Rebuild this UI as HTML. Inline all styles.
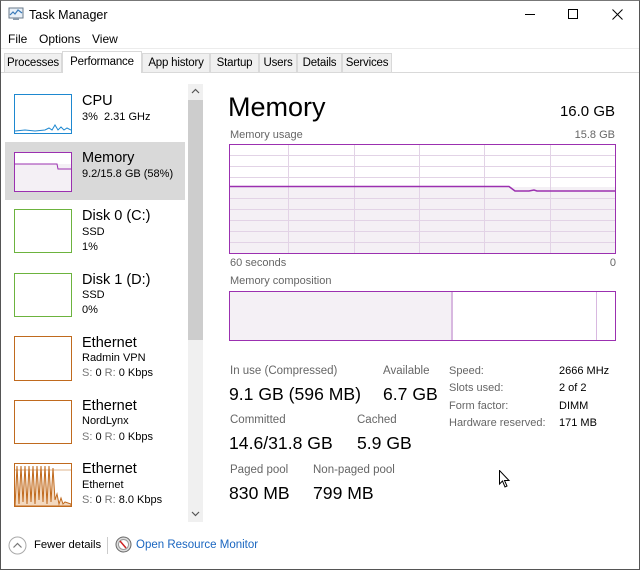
<!DOCTYPE html>
<html><head><meta charset="utf-8"><style>
*{margin:0;padding:0;box-sizing:border-box}
body{width:640px;height:570px;overflow:hidden;background:#fff;font-family:"Liberation Sans",sans-serif;color:#000;position:relative}
.a{position:absolute;white-space:nowrap}
.frame{position:absolute;left:0;top:0;width:640px;height:570px;border:1px solid #555;border-top-color:#777;pointer-events:none}
.tab{position:absolute;top:53px;height:19px;border:1px solid #d9d9d9;border-bottom:none;background:#f0f0f0;font-size:11.5px;line-height:18px;text-align:center;white-space:nowrap;overflow:hidden;color:#000;letter-spacing:-0.2px}
.th{position:absolute;left:14px;width:58px;height:40px;background:#fff}
.t1{font-size:14.5px;left:82px}
.t2{font-size:11px;left:82px}
.g{color:#777}
.lbl{font-size:11.5px;color:#666}
.big{font-size:17.6px}
.sl{font-size:11px;color:#666}
.sv{font-size:11px;color:#000}
</style></head><body>
<svg class="a" style="left:8px;top:7px" width="16" height="14" viewBox="0 0 16 14"><rect x="1" y="1" width="14" height="10" fill="#e8f0f8" stroke="#6a7a8a"/><polyline points="2,8 5,5 7,7 10,3 14,6" fill="none" stroke="#3a7ab8" stroke-width="1.2"/><rect x="5" y="11" width="6" height="2" fill="#8a9aaa"/></svg>
<div class="a" style="left:29px;top:8px;font-size:12.5px">Task Manager</div>
<div class="a" style="left:525px;top:14px;width:10px;height:1px;background:#000"></div>
<div class="a" style="left:568px;top:9px;width:10px;height:10px;border:1px solid #000"></div>
<svg class="a" style="left:612px;top:9px" width="11" height="11"><path d="M0.5 0.5L10.5 10.5M10.5 0.5L0.5 10.5" stroke="#000" stroke-width="1"/></svg>
<div class="a" style="left:8px;top:32px;font-size:12px">File</div>
<div class="a" style="left:39px;top:32px;font-size:12px">Options</div>
<div class="a" style="left:92px;top:32px;font-size:12px">View</div>
<div class="a" style="left:1px;top:48px;width:638px;height:1px;background:#ececec"></div>
<div class="a" style="left:1px;top:72px;width:638px;height:1px;background:#d9d9d9"></div>
<div class="tab" style="left:4px;width:58px">Processes</div>
<div class="tab" style="left:62px;top:51px;height:22px;width:80px;background:#fff;line-height:20px">Performance</div>
<div class="tab" style="left:142px;width:68px">App history</div>
<div class="tab" style="left:210px;width:49px">Startup</div>
<div class="tab" style="left:259px;width:38px">Users</div>
<div class="tab" style="left:297px;width:45px">Details</div>
<div class="tab" style="left:342px;width:50px">Services</div>
<div class="a" style="left:5px;top:142px;width:180px;height:58px;background:#d9d9d9"></div>
<div class="th" style="top:94px;border:1px solid #1e88d0"><svg width="56" height="38" style="position:absolute;left:0;top:0"><polyline points="0,36 10,35 20,36 30,35 34,33 37,35 40,30 43,35 46,32 49,35 52,33 56,35" fill="none" stroke="#1e88d0" stroke-width="1"/></svg></div>
<div class="a t1" style="top:93px">CPU</div><div class="a t2" style="top:111px">3%&nbsp; 2.31 GHz</div>
<div class="th" style="top:152px;border:1px solid #9b30b0;background:linear-gradient(#fff 0 11px,#f4f0f5 11px)"><svg width="56" height="38" style="position:absolute;left:0;top:0"><polyline points="0,11 42,11 43,16 56,16" fill="none" stroke="#9b30b0" stroke-width="1"/></svg></div>
<div class="a t1" style="top:150px">Memory</div><div class="a t2" style="top:168px">9.2/15.8 GB (58%)</div>
<div class="th" style="top:209px;height:44px;border:1px solid #6cb33e"></div>
<div class="a t1" style="top:208px">Disk 0 (C:)</div><div class="a t2" style="top:226px">SSD</div><div class="a t2" style="top:241px">1%</div>
<div class="th" style="top:273px;height:44px;border:1px solid #6cb33e"></div>
<div class="a t1" style="top:272px">Disk 1 (D:)</div><div class="a t2" style="top:289px">SSD</div><div class="a t2" style="top:304px">0%</div>
<div class="th" style="top:336px;height:45px;border:1px solid #c06a1e"></div>
<div class="a t1" style="top:335px">Ethernet</div><div class="a t2" style="top:352px">Radmin VPN</div><div class="a t2" style="top:367px"><span class="g">S:</span> 0 <span class="g">R:</span> 0 Kbps</div>
<div class="th" style="top:400px;height:44px;border:1px solid #c06a1e"></div>
<div class="a t1" style="top:398px">Ethernet</div><div class="a t2" style="top:415px">NordLynx</div><div class="a t2" style="top:431px"><span class="g">S:</span> 0 <span class="g">R:</span> 0 Kbps</div>
<div class="th" style="top:463px;height:44px;border:1px solid #c06a1e"><svg width="56" height="42" style="position:absolute;left:0;top:0"><path d="M0 42L2 2L4 40L6 2L8 38L10 2L12 40L14 2L16 38L18 2L20 40L22 2L24 36L26 2L28 38L30 2L32 40L34 2L36 38L38 4L40 36L42 30L44 40L46 34L48 40L50 38L56 40L56 42Z" fill="#f3d9c0" stroke="#c06a1e" stroke-width="1"/><line x1="0" y1="6" x2="56" y2="6" stroke="#c06a1e" stroke-width="0.6"/></svg></div>
<div class="a t1" style="top:461px">Ethernet</div><div class="a t2" style="top:479px">Ethernet</div><div class="a t2" style="top:494px"><span class="g">S:</span> 0 <span class="g">R:</span> 8.0 Kbps</div>
<div class="a" style="left:188px;top:84px;width:15px;height:438px;background:#f0f0f0"></div>
<div class="a" style="left:188px;top:100px;width:15px;height:240px;background:#cdcdcd"></div>
<svg class="a" style="left:191px;top:88px" width="9" height="6"><polyline points="1,5 4.5,1.5 8,5" fill="none" stroke="#555" stroke-width="1.2"/></svg>
<svg class="a" style="left:191px;top:511px" width="9" height="6"><polyline points="1,1 4.5,4.5 8,1" fill="none" stroke="#555" stroke-width="1.2"/></svg>
<div class="a" style="left:228px;top:92px;font-size:27px">Memory</div>
<div class="a" style="right:25px;top:103px;font-size:15px">16.0 GB</div>
<div class="a lbl" style="left:230px;top:129px;font-size:11px">Memory usage</div>
<div class="a lbl" style="right:25px;top:129px;font-size:11px">15.8 GB</div>
<svg class="a" style="left:229px;top:144px" width="387" height="110" viewBox="0 0 387 110">
<rect x="1" y="43" width="385" height="66" fill="#f4f0f5"/>
<g stroke="#e2d3e6" stroke-width="1">
<line x1="0" y1="11.5" x2="387" y2="11.5"/><line x1="0" y1="22.5" x2="387" y2="22.5"/><line x1="0" y1="33.5" x2="387" y2="33.5"/><line x1="0" y1="54.5" x2="387" y2="54.5"/><line x1="0" y1="65.5" x2="387" y2="65.5"/><line x1="0" y1="76.5" x2="387" y2="76.5"/><line x1="0" y1="87.5" x2="387" y2="87.5"/><line x1="0" y1="98.5" x2="387" y2="98.5"/>
<line x1="59.5" y1="0" x2="59.5" y2="110"/><line x1="125.5" y1="0" x2="125.5" y2="110"/><line x1="190.5" y1="0" x2="190.5" y2="110"/><line x1="255.5" y1="0" x2="255.5" y2="110"/><line x1="321.5" y1="0" x2="321.5" y2="110"/>
</g>
<polyline points="1,42.5 280,42.5 286,47 300,47 305,46 308,47 386,47" fill="none" stroke="#9b30b0" stroke-width="1.5"/>
<rect x="0.5" y="0.5" width="386" height="109" fill="none" stroke="#9b30b0"/>
</svg>
<div class="a lbl" style="left:230px;top:257px;font-size:11px">60 seconds</div>
<div class="a lbl" style="right:24px;top:257px;font-size:11px">0</div>
<div class="a lbl" style="left:230px;top:275px;font-size:11px">Memory composition</div>
<svg class="a" style="left:229px;top:291px" width="387" height="50">
<rect x="1" y="1" width="222" height="48" fill="#f4f0f5"/>
<rect x="222" y="1" width="2" height="48" fill="#d8b8e0"/>
<line x1="367.5" y1="1" x2="367.5" y2="49" stroke="#d8b8e0"/>
<rect x="0.5" y="0.5" width="386" height="49" fill="none" stroke="#9b30b0"/>
</svg>
<div class="a lbl" style="left:230px;top:365px">In use (Compressed)</div>
<div class="a big" style="left:229px;top:384px">9.1 GB (596 MB)</div>
<div class="a lbl" style="left:383px;top:365px">Available</div>
<div class="a big" style="left:383px;top:384px">6.7 GB</div>
<div class="a lbl" style="left:230px;top:414px">Committed</div>
<div class="a big" style="left:229px;top:433px">14.6/31.8 GB</div>
<div class="a lbl" style="left:357px;top:414px">Cached</div>
<div class="a big" style="left:357px;top:433px">5.9 GB</div>
<div class="a lbl" style="left:230px;top:464px">Paged pool</div>
<div class="a big" style="left:229px;top:483px">830 MB</div>
<div class="a lbl" style="left:313px;top:464px">Non-paged pool</div>
<div class="a big" style="left:313px;top:483px">799 MB</div>
<div class="a sl" style="left:449px;top:365px">Speed:</div><div class="a sv" style="left:559px;top:365px">2666 MHz</div>
<div class="a sl" style="left:449px;top:382px">Slots used:</div><div class="a sv" style="left:559px;top:382px">2 of 2</div>
<div class="a sl" style="left:449px;top:400px">Form factor:</div><div class="a sv" style="left:559px;top:400px">DIMM</div>
<div class="a sl" style="left:449px;top:417px">Hardware reserved:</div><div class="a sv" style="left:559px;top:417px">171 MB</div>
<svg class="a" style="left:499px;top:470px" width="12" height="18"><path d="M0.5 0.5L0.5 14L3.5 11L6 17L8 16L5.5 10.5L10 10.5Z" fill="#fff" stroke="#000"/></svg>
<svg class="a" style="left:8px;top:536px" width="19" height="19"><circle cx="9.5" cy="9.5" r="8.5" fill="#fff" stroke="#aaa"/><polyline points="5.5,11.5 9.5,7.5 13.5,11.5" fill="none" stroke="#777" stroke-width="1.2"/></svg>
<div class="a" style="left:34px;top:539px;font-size:11.3px">Fewer details</div>
<div class="a" style="left:107px;top:537px;width:1px;height:17px;background:#ccc"></div>
<svg class="a" style="left:115px;top:536px" width="17" height="17"><circle cx="8.5" cy="8.5" r="7.5" fill="#ddd" stroke="#666"/><circle cx="8.5" cy="8.5" r="5" fill="#fff" stroke="#999"/><line x1="5" y1="5" x2="11" y2="12" stroke="#c22" stroke-width="1.5"/></svg>
<div class="a" style="left:136px;top:539px;font-size:11.5px;color:#1a66c0">Open Resource Monitor</div>
<div class="frame"></div>
</body></html>
